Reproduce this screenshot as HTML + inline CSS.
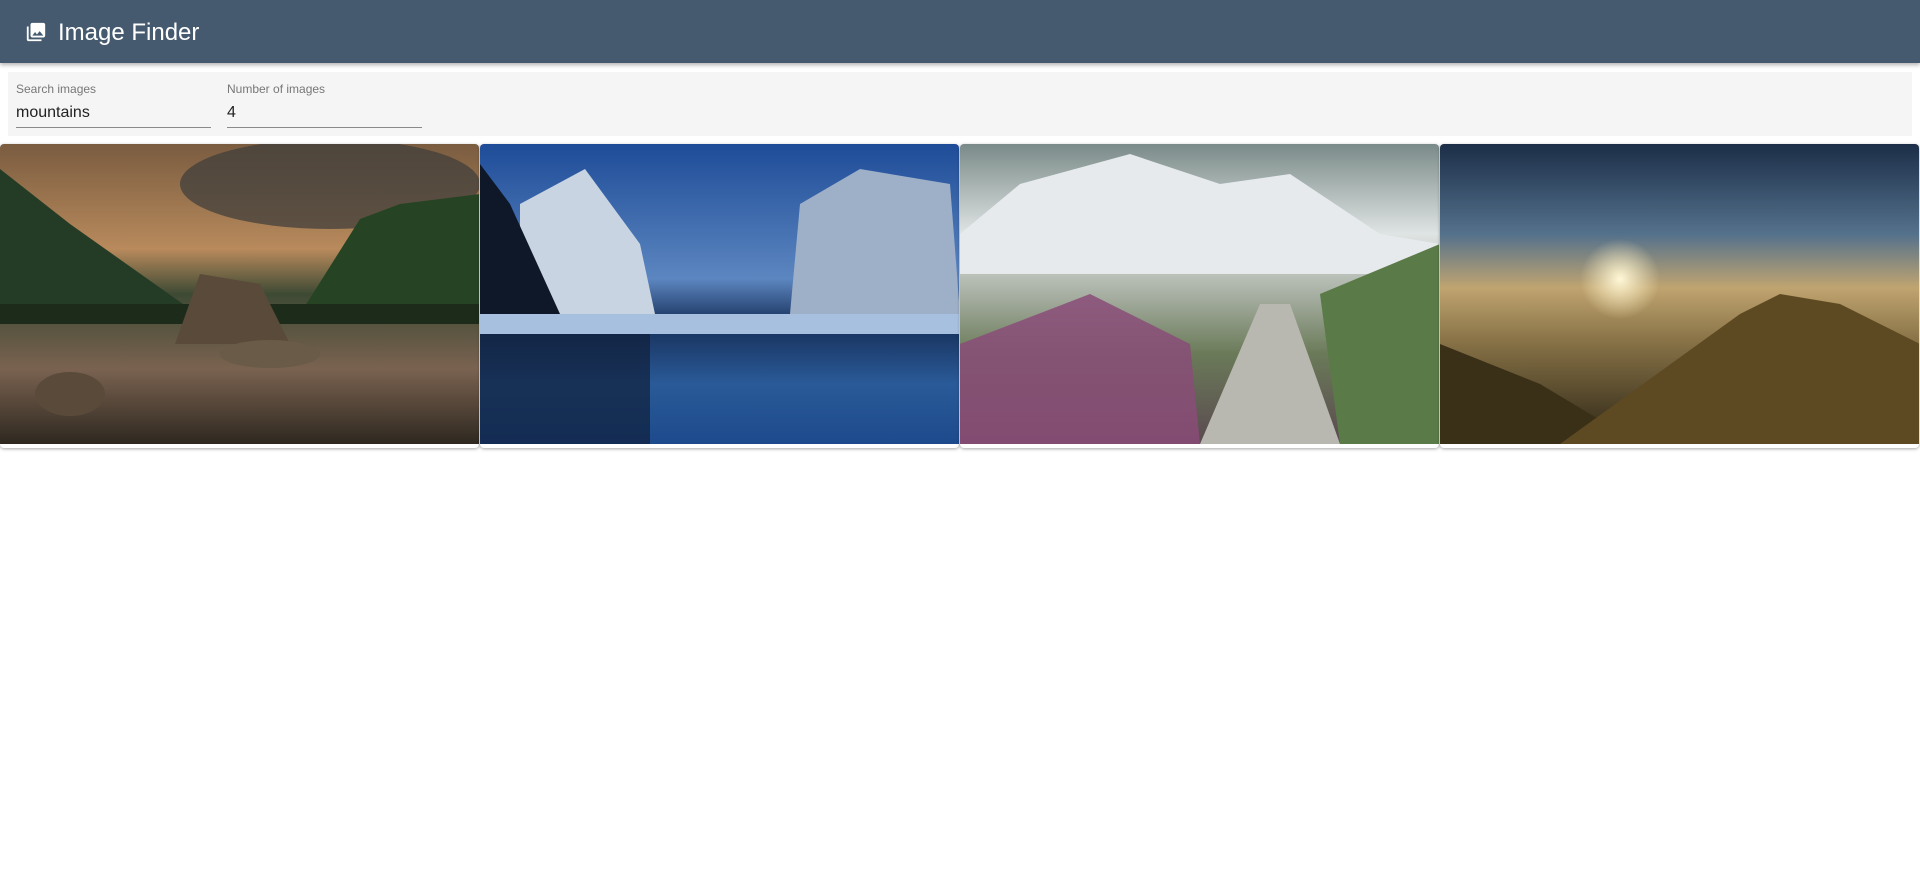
<!DOCTYPE html>
<html><head><meta charset="utf-8"><style>
body{margin:0;width:1920px;height:880px;background:#fff;font-family:"Liberation Sans",Roboto,sans-serif;overflow:hidden;position:relative}
.hdr{position:absolute;left:0;top:0;width:1920px;height:63px;background:#455a6f;box-shadow:0 2px 4px rgba(0,0,0,.3);z-index:2}
.hdr .t{position:absolute;left:58px;top:19px;color:#fff;font-size:24px}
.hdr svg{position:absolute;left:25px;top:21px}
.bar{position:absolute;left:8px;top:72px;width:1904px;height:64px;background:#f5f5f5}
.f{position:absolute;top:0;width:195px;height:55px;border-bottom:1px solid #8a8a8a}
.f .l{position:absolute;top:10px;left:0;font-size:12px;color:#777}
.f .v{position:absolute;top:32px;left:0;font-size:16px;color:#222}
.card{position:absolute;top:144px;width:479px;height:304px;border-radius:4px;box-shadow:0 1px 3px rgba(0,0,0,.35);overflow:hidden;background:#fff}
.card svg{display:block}
</style></head><body>
<div class="hdr">
<svg width="22" height="22" viewBox="0 0 24 24"><path fill="#fff" d="M22 16V4c0-1.1-.9-2-2-2H8c-1.1 0-2 .9-2 2v12c0 1.1.9 2 2 2h12c1.1 0 2-.9 2-2zm-11-4l2.03 2.71L16 11l4 5H8l3-4zM2 6v14c0 1.1.9 2 2 2h14v-2H4V6H2z"/></svg>
<div class="t">Image Finder</div></div>
<div class="bar">
<div class="f" style="left:8px"><div class="l">Search images</div><div class="v">mountains</div></div>
<div class="f" style="left:219px"><div class="l">Number of images</div><div class="v">4</div></div>
</div>
<div class="card" style="left:0"><svg width="480" height="300">
<defs><linearGradient id="a1" x1="0" y1="0" x2="0" y2="1"><stop offset="0" stop-color="#7a5c40"/><stop offset=".35" stop-color="#b88a5c"/><stop offset=".5" stop-color="#3e4a34"/><stop offset=".75" stop-color="#7a6250"/><stop offset="1" stop-color="#2e2820"/></linearGradient></defs>
<rect width="480" height="300" fill="url(#a1)"/>
<ellipse cx="330" cy="40" rx="150" ry="45" fill="#3c3c3a" opacity=".7"/>
<polygon points="0,25 70,80 190,165 0,170" fill="#243c26"/>
<polygon points="300,170 360,75 400,60 480,50 480,170" fill="#264424"/>
<rect y="160" width="480" height="20" fill="#1d2b1a"/>
<polygon points="175,200 200,130 260,140 290,200" fill="#5a4a3a"/>
<ellipse cx="270" cy="210" rx="50" ry="14" fill="#6a5a48"/>
<ellipse cx="70" cy="250" rx="35" ry="22" fill="#5a4a3a"/>
</svg></div>
<div class="card" style="left:480px"><svg width="480" height="300">
<defs><linearGradient id="b1" x1="0" y1="0" x2="0" y2="1"><stop offset="0" stop-color="#1e4c98"/><stop offset=".45" stop-color="#5c86c0"/><stop offset=".6" stop-color="#17305a"/><stop offset=".8" stop-color="#2a5a98"/><stop offset="1" stop-color="#1d4a8c"/></linearGradient></defs>
<rect width="480" height="300" fill="url(#b1)"/>
<polygon points="40,60 105,25 160,100 175,170 40,170" fill="#c8d4e2"/>
<polygon points="310,170 320,60 380,25 470,40 480,170" fill="#9eb0c8"/>
<polygon points="0,20 30,60 80,170 200,175 0,180" fill="#0e1828"/>
<rect y="170" width="480" height="20" fill="#a8c0e0"/>
<rect y="190" width="170" height="110" fill="#10203a" opacity=".7"/>
</svg></div>
<div class="card" style="left:960px"><svg width="480" height="300">
<defs><linearGradient id="c1" x1="0" y1="0" x2="0" y2="1"><stop offset="0" stop-color="#7a8a88"/><stop offset=".3" stop-color="#dfe4e4"/><stop offset=".5" stop-color="#a8b0a4"/><stop offset=".7" stop-color="#6a7a58"/><stop offset="1" stop-color="#5a4a50"/></linearGradient></defs>
<rect width="480" height="300" fill="url(#c1)"/>
<polygon points="0,90 60,40 170,10 260,40 330,30 420,90 480,100 480,130 0,130" fill="#e6eaec"/>
<polygon points="0,200 130,150 230,200 240,300 0,300" fill="#8a4c78" opacity=".85"/>
<polygon points="240,300 300,160 330,160 380,300" fill="#b8b8b0"/>
<polygon points="380,300 360,150 480,100 480,300" fill="#5a7a48"/>
</svg></div>
<div class="card" style="left:1440px"><svg width="480" height="300">
<defs><linearGradient id="d1" x1="0" y1="0" x2="0" y2="1"><stop offset="0" stop-color="#1c2e48"/><stop offset=".3" stop-color="#54718c"/><stop offset=".48" stop-color="#c0a470"/><stop offset=".65" stop-color="#8a7448"/><stop offset="1" stop-color="#2a2414"/></linearGradient>
<radialGradient id="d2"><stop offset="0" stop-color="#fff8d8"/><stop offset="1" stop-color="#fff0c0" stop-opacity="0"/></radialGradient></defs>
<rect width="480" height="300" fill="url(#d1)"/>
<circle cx="180" cy="135" r="40" fill="url(#d2)"/>
<polygon points="0,200 100,240 200,300 0,300" fill="#3a3018"/>
<polygon points="120,300 300,170 340,150 400,160 480,200 480,300" fill="#5e4a22"/>
</svg></div>
</body></html>
